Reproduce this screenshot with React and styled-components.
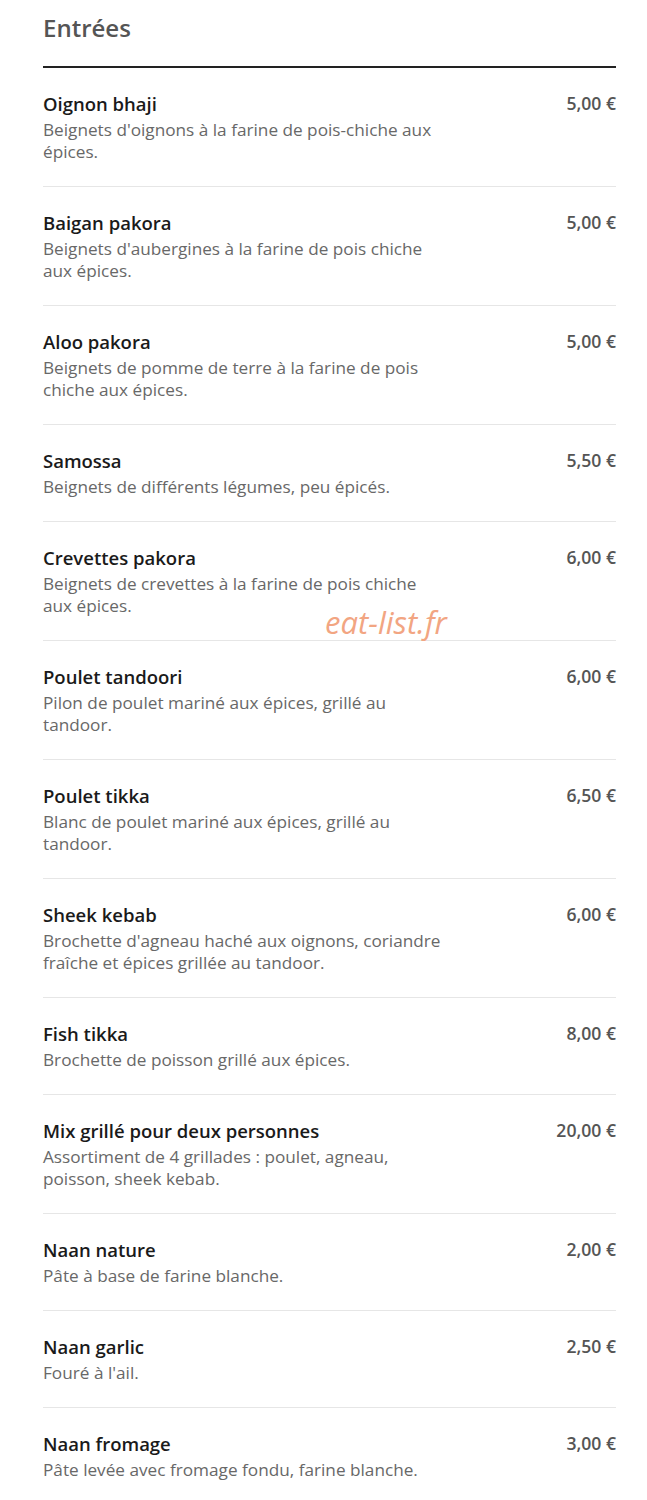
import React from "react";
import styled, { createGlobalStyle } from "styled-components";

const Global = createGlobalStyle`
  html, body { margin: 0; padding: 0; background: #ffffff; }
  body { font-family: "Open Sans", "Noto Sans", sans-serif; -webkit-font-smoothing: antialiased; }
`;

const Page = styled.main`
  position: relative;
  padding: 11px 31px 0 43px;
`;

const Title = styled.h2`
  margin: 0 0 22px;
  font-size: 24px;
  line-height: 33px;
  font-weight: 600;
  color: #555555;
`;

const List = styled.ul`
  list-style: none;
  margin: 0;
  padding: 0;
  border-top: 2px solid #222222;
`;

const Item = styled.li`
  display: flex;
  justify-content: space-between;
  align-items: flex-start;
  padding: 23px 0;
  border-top: ${(p) => (p.$first ? "none" : "1px solid #e6e6e6")};
`;

const Info = styled.div`
  display: flex;
  flex-direction: column;
`;

const Name = styled.span`
  font-size: 18.5px;
  line-height: 26px;
  font-weight: 600;
  color: #1a1a1a;
`;

const Desc = styled.p`
  margin: 2px 0 0;
  max-width: 402px;
  font-size: 17.2px;
  line-height: 22px;
  color: #686868;
`;

const Price = styled.span`
  font-size: 17.6px;
  line-height: 24px;
  font-weight: 600;
  color: #555555;
  white-space: nowrap;
`;

const Watermark = styled.div`
  position: absolute;
  left: 325px;
  top: 600px;
  font-size: 31px;
  line-height: 44px;
  font-style: italic;
  font-weight: 400;
  color: #f2a582;
  pointer-events: none;
`;

const items = [
  ["Oignon bhaji", "Beignets d'oignons à la farine de pois-chiche aux épices.", "5,00 €"],
  ["Baigan pakora", "Beignets d'aubergines à la farine de pois chiche aux épices.", "5,00 €"],
  ["Aloo pakora", "Beignets de pomme de terre à la farine de pois chiche aux épices.", "5,00 €"],
  ["Samossa", "Beignets de différents légumes, peu épicés.", "5,50 €"],
  ["Crevettes pakora", "Beignets de crevettes à la farine de pois chiche aux épices.", "6,00 €"],
  ["Poulet tandoori", "Pilon de poulet mariné aux épices, grillé au tandoor.", "6,00 €"],
  ["Poulet tikka", "Blanc de poulet mariné aux épices, grillé au tandoor.", "6,50 €"],
  ["Sheek kebab", "Brochette d'agneau haché aux oignons, coriandre fraîche et épices grillée au tandoor.", "6,00 €"],
  ["Fish tikka", "Brochette de poisson grillé aux épices.", "8,00 €"],
  ["Mix grillé pour deux personnes", "Assortiment de 4 grillades : poulet, agneau, poisson, sheek kebab.", "20,00 €"],
  ["Naan nature", "Pâte à base de farine blanche.", "2,00 €"],
  ["Naan garlic", "Fouré à l'ail.", "2,50 €"],
  ["Naan fromage", "Pâte levée avec fromage fondu, farine blanche.", "3,00 €"],
];

export default function App() {
  return (
    <>
      <Global />
      <Page>
        <Title>Entrées</Title>
        <List>
          {items.map(([n, d, p], i) => (
            <Item key={n} $first={i === 0}>
              <Info>
                <Name>{n}</Name>
                <Desc>{d}</Desc>
              </Info>
              <Price>{p}</Price>
            </Item>
          ))}
        </List>
        <Watermark>eat-list.fr</Watermark>
      </Page>
    </>
  );
}
